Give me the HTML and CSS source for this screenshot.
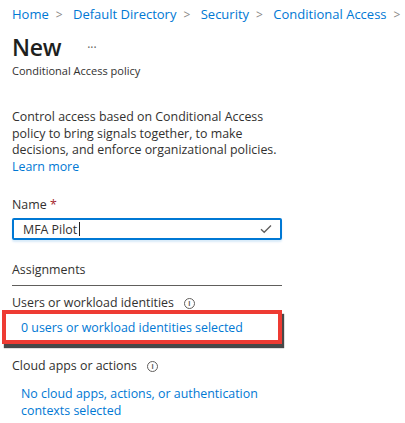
FILE: index.html
```html
<!DOCTYPE html>
<html lang="en">
<head>
    <meta charset="UTF-8">
    <meta name="viewport" content="width=device-width, initial-scale=1.0">
    <title>New - Conditional Access policy</title>
    <link rel="stylesheet" href="styles.css">
</head>
<body>
    <nav class="breadcrumb">
        <a href="#">Home</a><span class="sep">&gt;</span>
        <a href="#">Default Directory</a><span class="sep">&gt;</span>
        <a href="#">Security</a><span class="sep">&gt;</span>
        <a href="#">Conditional Access</a><span class="sep">&gt;</span>
    </nav>

    <div class="page-header">
        <h1>New</h1>
        <span class="more">&middot;&middot;&middot;</span>
    </div>
    <div class="subtitle">Conditional Access policy</div>

    <div class="form">
        <p class="intro">
            Control access based on Conditional Access<br>
            policy to bring signals together, to make<br>
            decisions, and enforce organizational policies.<br>
            <a href="#">Learn more</a>
        </p>

        <label class="field-label" for="policy-name">Name <span class="req">*</span></label>
        <div class="input-box">
            <input id="policy-name" type="text" value="MFA Pilot">
            <span class="caret"></span>
            <svg class="check" width="12" height="10" viewBox="0 0 12 10">
                <path d="M1 5.2 L4.2 8.3 L11 1.5" fill="none" stroke="#605e5c" stroke-width="1.3"/>
            </svg>
        </div>

        <h2 class="section-title">Assignments</h2>

        <div class="item-label">
            Users or workload identities
            <span class="info">i</span>
        </div>
        <div class="highlight">
            <a href="#">0 users or workload identities selected</a>
        </div>

        <div class="item-label cloud">
            Cloud apps or actions
            <span class="info">i</span>
        </div>
        <div class="item-value">
            <a href="#">No cloud apps, actions, or authentication<br>contexts selected</a>
        </div>
    </div>
</body>
</html>
```

FILE: styles.css
```css
body {
    margin: 0;
    padding: 0 12px;
    font-family: 'Open Sans', 'Noto Sans', sans-serif;
    font-size: 12.4px;
    color: #323130;
    background: #fff;
    overflow: hidden;
}

a {
    color: #0078d4;
    text-decoration: none;
}

.breadcrumb {
    padding-top: 4px;
    line-height: 20px;
    white-space: nowrap;
    font-size: 13px;
}

.breadcrumb .sep {
    color: #8a8886;
    margin: 0 7px;
    font-size: 12px;
}

.page-header {
    display: flex;
    align-items: center;
    margin-top: 8px;
    height: 28px;
}

h1 {
    margin: 0;
    font-size: 23px;
    font-weight: 600;
    color: #201f1e;
    letter-spacing: -0.3px;
}

.more {
    margin-left: 26px;
    color: #605e5c;
    font-size: 12px;
}

.subtitle {
    font-size: 11px;
    line-height: 16px;
    margin-top: 2px;
}

.form {
    width: 270px;
}

.intro {
    margin: 30px 0 0;
    line-height: 16.5px;
}

.field-label {
    display: block;
    margin-top: 21px;
    line-height: 18px;
}

.req {
    color: #a4262c;
}

.input-box {
    display: flex;
    align-items: center;
    height: 22px;
    margin-top: 4px;
    border: 2px solid #0078d4;
    border-radius: 2px;
    box-sizing: border-box;
    padding: 0 8px 0 9px;
    box-shadow: 0 2px 2px rgba(0, 120, 212, 0.15);
}

.input-box input {
    border: none;
    outline: none;
    padding: 0;
    font: inherit;
    color: #323130;
    width: 56px;
}

.caret {
    width: 1px;
    height: 14px;
    background: #201f1e;
}

.check {
    margin-left: auto;
}

.section-title {
    margin: 21px 0 0;
    font-size: 12.4px;
    font-weight: 400;
    line-height: 18px;
    padding-bottom: 6px;
    border-bottom: 1px solid #605e5c;
}

.item-label {
    display: flex;
    align-items: center;
    margin-top: 9px;
    line-height: 16px;
}

.info {
    display: inline-flex;
    align-items: center;
    justify-content: center;
    width: 9px;
    height: 9px;
    margin-left: 10px;
    border: 1px solid #605e5c;
    border-radius: 50%;
    font-size: 7px;
    font-weight: 700;
    color: #605e5c;
    line-height: 1;
}

.highlight {
    margin: -1px 0 0 -10px;
    height: 34px;
    box-sizing: border-box;
    border: 4px solid #ee3b33;
    padding-left: 15px;
    display: flex;
    align-items: center;
    box-shadow: 2px 4px 1px rgba(40, 40, 40, 0.85);
}

.item-label.cloud {
    margin-top: 14px;
}

.item-value {
    margin-top: 11px;
    padding-left: 9px;
    line-height: 17px;
}
```
